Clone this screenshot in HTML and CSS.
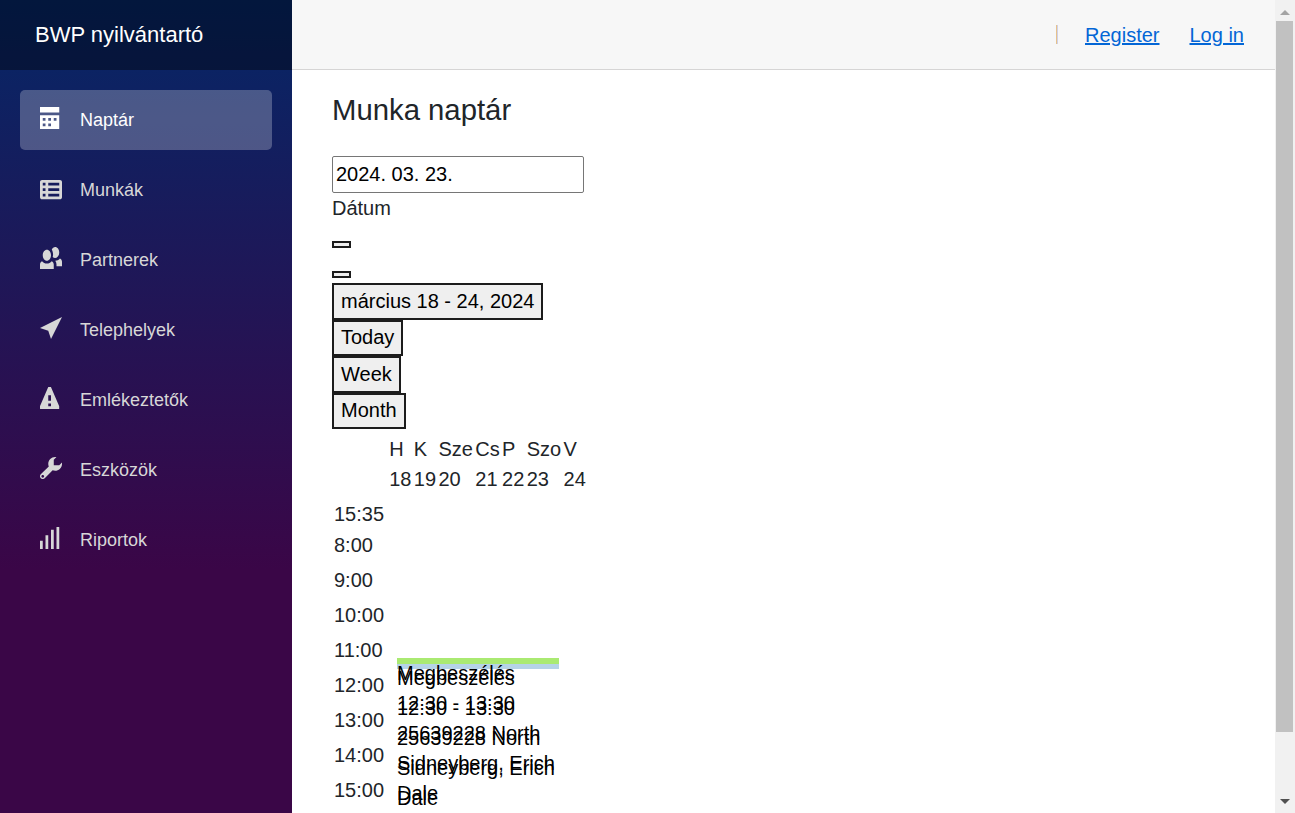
FILE: index.html
```html
<!DOCTYPE html>
<html lang="hu">

<head>
  <meta charset="UTF-8" />
  <meta name="viewport" content="width=device-width, initial-scale=1.0" />
  <title>Munka naptár</title>
  <link rel="stylesheet" href="styles.css">
</head>

<body>
  <div class="page">
    <aside class="sidebar">
      <div class="brand">BWP nyilvántartó</div>
      <nav class="nav">
        <a href="#" class="nav-link active">
          <svg class="nav-icon" viewBox="0 0 8 8"><path d="M0 0v2h7v-2h-7zm0 3v4.91c0 .05.04.09.09.09h6.81c.05 0 .09-.04.09-.09v-4.91h-7zm1 1h1v1h-1v-1zm2 0h1v1h-1v-1zm2 0h1v1h-1v-1zm-4 2h1v1h-1v-1zm2 0h1v1h-1v-1z"/></svg>
          Naptár
        </a>
        <a href="#" class="nav-link">
          <svg class="nav-icon nav-icon-low" viewBox="0 0 8 8"><path d="M.75 0c-.41 0-.75.34-.75.75v5.5c0 .41.34.75.75.75h6.5c.41 0 .75-.34.75-.75v-5.5c0-.41-.34-.75-.75-.75h-6.5zm.25 1h1v1h-1v-1zm2 0h4v1h-4v-1zm-2 2h1v1h-1v-1zm2 0h4v1h-4v-1zm-2 2h1v1h-1v-1zm2 0h4v1h-4v-1z"/></svg>
          Munkák
        </a>
        <a href="#" class="nav-link">
          <svg class="nav-icon" viewBox="0 0 8 8"><path d="M5.5 0c-.51 0-.95.35-1.22.88.32.53.47 1.17.47 1.88 0 .3-.05.58-.13.84.24.24.54.4.88.4.83 0 1.5-.9 1.5-2s-.67-2-1.5-2zm-3 1c-.83 0-1.5.9-1.5 2s.67 2 1.5 2 1.5-.9 1.5-2-.67-2-1.5-2zm4.75 3.16c-.43.51-1.02.82-1.69.84.27.38.44.84.44 1.34v.66h2v-1.66c0-.52-.31-.97-.75-1.19zm-6.5 1c-.44.22-.75.67-.75 1.19v1.66h5v-1.66c0-.52-.31-.97-.75-1.19-.45.53-1.06.84-1.75.84s-1.3-.32-1.75-.84z"/></svg>
          Partnerek
        </a>
        <a href="#" class="nav-link">
          <svg class="nav-icon" viewBox="0 0 8 8"><path d="M8 0l-8 4 3 1 1 3 4-8z"/></svg>
          Telephelyek
        </a>
        <a href="#" class="nav-link">
          <svg class="nav-icon" viewBox="0 0 8 8"><path d="M3.09 0c-.06 0-.1.04-.13.09l-2.94 6.81c-.02.05-.03.13-.03.19v.81c0 .05.04.09.09.09h6.81c.05 0 .09-.04.09-.09v-.81c0-.05-.01-.14-.03-.19l-2.94-6.81c-.02-.05-.07-.09-.13-.09h-.81zm-.09 3h1v2h-1v-2zm0 3h1v1h-1v-1z"/></svg>
          Emlékeztetők
        </a>
        <a href="#" class="nav-link">
          <svg class="nav-icon" viewBox="0 0 8 8"><path d="M5.5 0c-1.38 0-2.5 1.12-2.5 2.5 0 .32.08.62.19.91l-2.91 2.88c-.39.39-.39 1.05 0 1.44.2.2.46.28.72.28.26 0 .52-.09.72-.28l2.88-2.91c.28.11.58.19.91.19 1.38 0 2.5-1.12 2.5-2.5 0-.16 0-.32-.03-.47l-.97.97h-2v-2l.97-.97c-.15-.03-.31-.03-.47-.03zm-4.5 6.5c.28 0 .5.22.5.5s-.22.5-.5.5-.5-.22-.5-.5.22-.5.5-.5z"/></svg>
          Eszközök
        </a>
        <a href="#" class="nav-link">
          <svg class="nav-icon" viewBox="0 0 8 8"><path d="M6 0v8h1v-8h-1zm-2 1v7h1v-7h-1zm-2 2v5h1v-5h-1zm-2 2v3h1v-3h-1z"/></svg>
          Riportok
        </a>
      </nav>
    </aside>

    <main class="main">
      <header class="top-row">
        <span class="divider"></span>
        <a href="#" class="first-link">Register</a>
        <a href="#">Log in</a>
      </header>

      <div class="content">
        <h1>Munka naptár</h1>

        <div class="date-field">
          <input type="text" value="2024. 03. 23.">
          <label>Dátum</label>
        </div>

        <div class="scheduler">
          <div class="empty-btn-row"><button class="empty-btn"></button></div>
          <div class="empty-btn-row"><button class="empty-btn"></button></div>
          <button class="tool-btn">március 18 - 24, 2024</button>
          <button class="tool-btn">Today</button>
          <button class="tool-btn">Week</button>
          <button class="tool-btn">Month</button>

          <table class="week-head">
            <tr>
              <td class="gutter"></td>
              <td>H</td><td>K</td><td>Sze</td><td>Cs</td><td>P</td><td>Szo</td><td>V</td>
            </tr>
            <tr>
              <td class="gutter"></td>
              <td>18</td><td>19</td><td>20</td><td>21</td><td>22</td><td>23</td><td>24</td>
            </tr>
          </table>

          <div class="grid">
            <div class="now">15:35</div>
            <div class="hour">8:00</div>
            <div class="hour">9:00</div>
            <div class="hour">10:00</div>
            <div class="hour">11:00</div>
            <div class="hour">12:00</div>
            <div class="hour">13:00</div>
            <div class="hour">14:00</div>
            <div class="hour">15:00</div>

            <div class="event event-blue">Megbeszélés<br>12:30 - 13:30<br>25639228 North Sidneyberg, Erich Dale</div>
            <div class="event event-green">Megbeszélés<br>12:30 - 13:30<br>25639228 North Sidneyberg, Erich Dale</div>
          </div>
        </div>
      </div>
    </main>

    <div class="scrollbar">
      <div class="scroll-btn">
        <svg width="10" height="5" viewBox="0 0 10 5"><path d="M5 0l5 5H0z" fill="#a3a3a3"/></svg>
      </div>
      <div class="scroll-thumb"></div>
      <div class="scroll-btn scroll-btn-down">
        <svg width="10" height="5" viewBox="0 0 10 5"><path d="M0 0h10L5 5z" fill="#505050"/></svg>
      </div>
    </div>
  </div>
</body>

</html>
```

FILE: styles.css
```css
* {
  box-sizing: border-box;
}

html,
body {
  height: 100%;
  overflow: hidden;
}

body {
  margin: 0;
  font-family: "Liberation Sans", Arial, sans-serif;
  font-size: 20px;
  line-height: 1.5;
  color: #212529;
  background: #fff;
}

.page {
  display: flex;
  height: 100%;
}

.sidebar {
  flex: 0 0 292px;
  background-image: linear-gradient(180deg, #052767 0%, #3a0647 70%);
}

.brand {
  height: 70px;
  padding-left: 35px;
  font-size: 22px;
  line-height: 70px;
  color: #fff;
  background: rgba(0, 0, 0, 0.4);
}

.nav {
  display: flex;
  flex-direction: column;
  padding: 20px 20px 0;
  gap: 10px;
}

.nav-link {
  display: flex;
  align-items: center;
  height: 60px;
  padding-left: 20px;
  border-radius: 5px;
  font-size: 18px;
  color: #d7d7d7;
  text-decoration: none;
}

.nav-link.active {
  color: #fff;
  background: rgba(255, 255, 255, 0.25);
}

.nav-icon {
  width: 22px;
  height: 22px;
  margin-right: 18px;
  margin-bottom: 4px;
  fill: currentColor;
}

.nav-icon-low {
  margin-bottom: -2px;
}

.main {
  flex: 1;
  min-width: 0;
  overflow: hidden;
}

.top-row {
  display: flex;
  justify-content: flex-end;
  align-items: center;
  height: 70px;
  padding-right: 31px;
  background: #f7f7f7;
  border-bottom: 1px solid #d6d5d5;
}

.top-row a {
  margin-left: 30px;
  color: #0366d6;
}

.top-row .first-link {
  margin-left: 27px;
}

.divider {
  width: 2px;
  height: 19px;
  background: linear-gradient(90deg, #e6c28c 50%, #cfd0e8 50%);
}

.content {
  padding: 20px 40px 0;
}

h1 {
  margin: 0 0 26px;
  font-size: 29.3px;
  font-weight: 400;
  line-height: 40px;
}

.date-field input {
  display: block;
  width: 252px;
  height: 37px;
  padding: 1px 3px;
  border: 1px solid #767676;
  border-radius: 2px;
  font-family: inherit;
  font-size: 20px;
  color: #000;
}

.date-field label {
  display: block;
}

.empty-btn-row {
  height: 30px;
  padding-top: 18px;
}

.empty-btn {
  display: block;
  width: 19px;
  height: 7px;
  padding: 0;
  background: #efefef;
  border: 2px solid #1c1c1c;
}

.tool-btn {
  display: block;
  height: 36.5px;
  padding: 1px 7px;
  font-family: inherit;
  font-size: 20px;
  color: #000;
  background: #efefef;
  border: 2px solid #1c1c1c;
}

.week-head {
  margin-top: 4px;
  border-spacing: 2px;
  border-collapse: separate;
}

.week-head td {
  padding: 0 0.2px;
  height: 28px;
  line-height: 28px;
}

.week-head .gutter {
  width: 53px;
}

.grid {
  position: relative;
  padding-top: 4px;
  padding-left: 2px;
}

.now {
  height: 31px;
}

.hour {
  height: 35px;
}

.event {
  position: absolute;
  left: 65px;
  width: 162px;
  background-size: 100% 6px;
  background-repeat: no-repeat;
  color: #000;
}

.event-green {
  top: 163px;
  background-image: linear-gradient(#aaea72, #aaea72);
}

.event-blue {
  top: 168px;
  background-image: linear-gradient(#b5d3e7, #b5d3e7);
}

.scrollbar {
  display: flex;
  flex-direction: column;
  flex: 0 0 20px;
  background: #f1f1f1;
}

.scroll-btn {
  display: flex;
  justify-content: center;
  align-items: center;
  height: 21px;
  padding-top: 3px;
}

.scroll-btn-down {
  margin-top: 58px;
  height: 23px;
  padding-top: 0;
}

.scroll-thumb {
  height: 711px;
  margin-left: 1px;
  margin-right: 2px;
  background: #c1c1c1;
}
```
